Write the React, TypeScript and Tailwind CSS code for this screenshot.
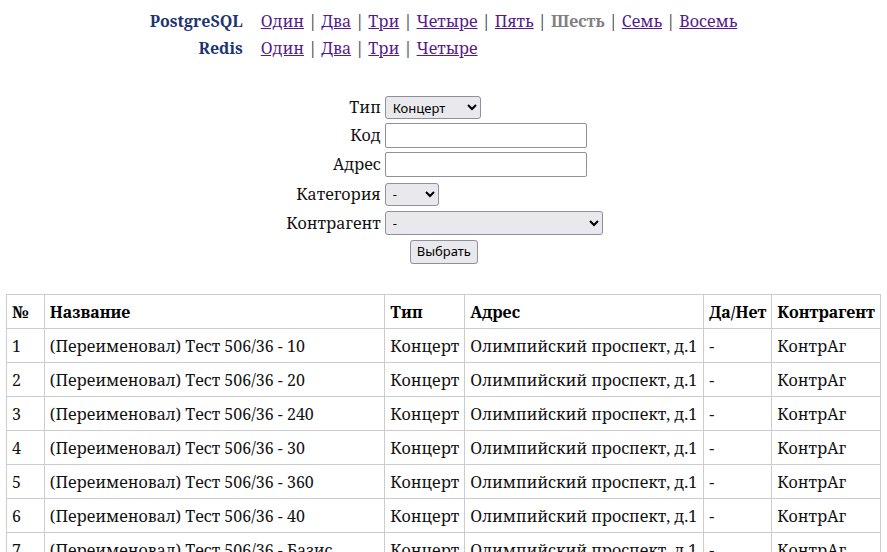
const pg = ["Один", "Два", "Три", "Четыре", "Пять", "Шесть", "Семь", "Восемь"];
const redis = ["Один", "Два", "Три", "Четыре"];

const rows = [
    { n: 1, name: "(Переименовал) Тест 506/36 - 10" },
    { n: 2, name: "(Переименовал) Тест 506/36 - 20" },
    { n: 3, name: "(Переименовал) Тест 506/36 - 240" },
    { n: 4, name: "(Переименовал) Тест 506/36 - 30" },
    { n: 5, name: "(Переименовал) Тест 506/36 - 360" },
    { n: 6, name: "(Переименовал) Тест 506/36 - 40" },
    { n: 7, name: "(Переименовал) Тест 506/36 - Базис" },
];

const NavLinks = ({ items, current }: { items: string[]; current?: string }) => (
    <td className="pl-[18px] text-left">
        {items.map((item, i) => (
            <span key={item}>
                {i > 0 && <span className="text-[#333]"> | </span>}
                {item === current ? (
                    <span className="font-bold text-[#808080]">{item}</span>
                ) : (
                    <a href="#" className="text-[#551a8b] underline">
                        {item}
                    </a>
                )}
            </span>
        ))}
    </td>
);

const ctrl = "font-['Noto_Sans',sans-serif] text-[13px] text-black";
const cell = "border border-[#ccc] px-[5px] whitespace-nowrap";

export default function App() {
    return (
        <div className="h-[552px] overflow-hidden bg-white font-['Noto_Serif','DejaVu_Serif',serif] text-[16px] text-[#111]">
            <table className="mx-auto mt-[7px] border-collapse">
                <tbody>
                    <tr className="h-[27px]">
                        <td className="text-right font-bold text-[#1c3572]">PostgreSQL</td>
                        <NavLinks items={pg} current="Шесть" />
                    </tr>
                    <tr className="h-[27px]">
                        <td className="text-right font-bold text-[#1c3572]">Redis</td>
                        <NavLinks items={redis} />
                    </tr>
                </tbody>
            </table>

            <form className="mt-[32px] pl-[2px]">
                <table className="mx-auto border-collapse">
                    <tbody>
                        <tr className="h-[28px]">
                            <td className="pr-[4px] text-right">Тип</td>
                            <td>
                                <select className={`${ctrl} h-[23px] w-[96px] rounded-[3px] border border-[#8f8f9d] bg-[#e9e9ed] pl-[3px]`}>
                                    <option>Концерт</option>
                                </select>
                            </td>
                        </tr>
                        <tr className="h-[28px]">
                            <td className="pr-[4px] text-right">Код</td>
                            <td>
                                <input className={`${ctrl} h-[25px] w-[202px] rounded-[2px] border border-[#8f8f9d] bg-white`} />
                            </td>
                        </tr>
                        <tr className="h-[30px]">
                            <td className="pr-[4px] text-right">Адрес</td>
                            <td>
                                <input className={`${ctrl} h-[25px] w-[202px] rounded-[2px] border border-[#8f8f9d] bg-white`} />
                            </td>
                        </tr>
                        <tr className="h-[29px]">
                            <td className="pr-[4px] text-right">Категория</td>
                            <td>
                                <select className={`${ctrl} h-[23px] w-[54px] rounded-[3px] border border-[#8f8f9d] bg-[#e9e9ed] pl-[3px]`}>
                                    <option>-</option>
                                </select>
                            </td>
                        </tr>
                        <tr className="h-[29px]">
                            <td className="pr-[4px] text-right">Контрагент</td>
                            <td>
                                <select className={`${ctrl} h-[24px] w-[218px] rounded-[3px] border border-[#8f8f9d] bg-[#e9e9ed] pl-[3px]`}>
                                    <option>-</option>
                                </select>
                            </td>
                        </tr>
                        <tr className="h-[28px]">
                            <td></td>
                            <td className="pl-[25px]">
                                <button
                                    type="button"
                                    className={`${ctrl} h-[24px] rounded-[3px] border border-[#8f8f9d] bg-[#e9e9ed] px-[6px]`}
                                >
                                    Выбрать
                                </button>
                            </td>
                        </tr>
                    </tbody>
                </table>
            </form>

            <table className="mx-[6px] mt-[29px] w-[875px] border-collapse">
                <thead>
                    <tr className="h-[34px] text-left text-black">
                        <th className={`${cell} w-[38px]`}>№</th>
                        <th className={`${cell} w-[341px]`}>Название</th>
                        <th className={`${cell} w-[80px]`}>Тип</th>
                        <th className={`${cell} w-[239px]`}>Адрес</th>
                        <th className={`${cell} w-[68px]`}>Да/Нет</th>
                        <th className={cell}>Контрагент</th>
                    </tr>
                </thead>
                <tbody>
                    {rows.map(r => (
                        <tr key={r.n} className="h-[34px]">
                            <td className={cell}>{r.n}</td>
                            <td className={cell}>{r.name}</td>
                            <td className={cell}>Концерт</td>
                            <td className={cell}>Олимпийский проспект, д.1</td>
                            <td className={cell}>-</td>
                            <td className={cell}>КонтрАг</td>
                        </tr>
                    ))}
                </tbody>
            </table>
        </div>
    );
}
